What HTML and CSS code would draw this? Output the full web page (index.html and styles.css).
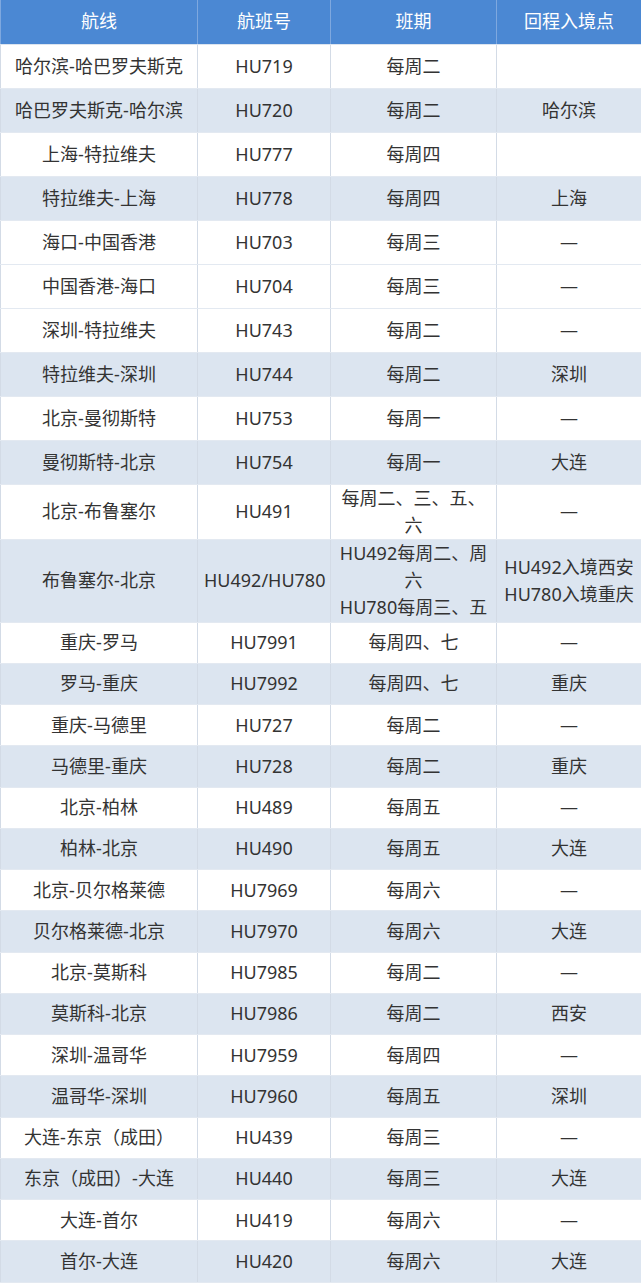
FILE: index.html
```html
<!DOCTYPE html>
<html lang="zh-CN">
<head>
<meta charset="utf-8">
<title>航线表</title>
<link rel="stylesheet" href="styles.css">
</head>
<body>
<table class="flights">
  <colgroup>
    <col class="c-route">
    <col class="c-no">
    <col class="c-sched">
    <col class="c-entry">
  </colgroup>
  <thead>
    <tr class="head"><th>航线</th><th>航班号</th><th>班期</th><th>回程入境点</th></tr>
  </thead>
  <tbody>
    <tr class="r44"><td>哈尔滨-哈巴罗夫斯克</td><td>HU719</td><td>每周二</td><td></td></tr>
    <tr class="r44 alt"><td>哈巴罗夫斯克-哈尔滨</td><td>HU720</td><td>每周二</td><td>哈尔滨</td></tr>
    <tr class="r44"><td>上海-特拉维夫</td><td>HU777</td><td>每周四</td><td></td></tr>
    <tr class="r44 alt"><td>特拉维夫-上海</td><td>HU778</td><td>每周四</td><td>上海</td></tr>
    <tr class="r44"><td>海口-中国香港</td><td>HU703</td><td>每周三</td><td>—</td></tr>
    <tr class="r44"><td>中国香港-海口</td><td>HU704</td><td>每周三</td><td>—</td></tr>
    <tr class="r44"><td>深圳-特拉维夫</td><td>HU743</td><td>每周二</td><td>—</td></tr>
    <tr class="r44 alt"><td>特拉维夫-深圳</td><td>HU744</td><td>每周二</td><td>深圳</td></tr>
    <tr class="r44"><td>北京-曼彻斯特</td><td>HU753</td><td>每周一</td><td>—</td></tr>
    <tr class="r44 alt"><td>曼彻斯特-北京</td><td>HU754</td><td>每周一</td><td>大连</td></tr>
    <tr class="r55"><td>北京-布鲁塞尔</td><td>HU491</td><td>每周二、三、五、六</td><td>—</td></tr>
    <tr class="r83 alt"><td>布鲁塞尔-北京</td><td>HU492/HU780</td><td>HU492每周二、周六<br>HU780每周三、五</td><td>HU492入境西安<br>HU780入境重庆</td></tr>
    <tr class="r41"><td>重庆-罗马</td><td>HU7991</td><td>每周四、七</td><td>—</td></tr>
    <tr class="r41 alt"><td>罗马-重庆</td><td>HU7992</td><td>每周四、七</td><td>重庆</td></tr>
    <tr class="r41"><td>重庆-马德里</td><td>HU727</td><td>每周二</td><td>—</td></tr>
    <tr class="r41 alt"><td>马德里-重庆</td><td>HU728</td><td>每周二</td><td>重庆</td></tr>
    <tr class="r41"><td>北京-柏林</td><td>HU489</td><td>每周五</td><td>—</td></tr>
    <tr class="r41 alt"><td>柏林-北京</td><td>HU490</td><td>每周五</td><td>大连</td></tr>
    <tr class="r41"><td>北京-贝尔格莱德</td><td>HU7969</td><td>每周六</td><td>—</td></tr>
    <tr class="r41 alt"><td>贝尔格莱德-北京</td><td>HU7970</td><td>每周六</td><td>大连</td></tr>
    <tr class="r41"><td>北京-莫斯科</td><td>HU7985</td><td>每周二</td><td>—</td></tr>
    <tr class="r41 alt"><td>莫斯科-北京</td><td>HU7986</td><td>每周二</td><td>西安</td></tr>
    <tr class="r41"><td>深圳-温哥华</td><td>HU7959</td><td>每周四</td><td>—</td></tr>
    <tr class="r41 alt"><td>温哥华-深圳</td><td>HU7960</td><td>每周五</td><td>深圳</td></tr>
    <tr class="r41"><td>大连-东京（成田）</td><td>HU439</td><td>每周三</td><td>—</td></tr>
    <tr class="r41 alt"><td>东京（成田）-大连</td><td>HU440</td><td>每周三</td><td>大连</td></tr>
    <tr class="r41"><td>大连-首尔</td><td>HU419</td><td>每周六</td><td>—</td></tr>
    <tr class="r41 alt"><td>首尔-大连</td><td>HU420</td><td>每周六</td><td>大连</td></tr>
  </tbody>
</table>
</body>
</html>
```
FILE: styles.css
```css
html, body {
  margin: 0;
  padding: 0;
  background: #ffffff;
}

body {
  font-family: "Noto Sans", "Noto Sans CJK SC", sans-serif;
  color: #333333;
}

.flights {
  width: 641px;
  border-collapse: collapse;
  table-layout: fixed;
}

.c-route { width: 197px; }
.c-no { width: 133px; }
.c-sched { width: 166px; }
.c-entry { width: 145px; }

.flights th,
.flights td {
  padding: 0 6px;
  text-align: center;
  vertical-align: middle;
  font-size: 18px;
  line-height: 27px;
  font-weight: normal;
  border-left: 1px solid #d3dbe6;
  border-right: 1px solid #d3dbe6;
  border-bottom: 1px solid #e3e9f1;
}

.head th {
  height: 44px;
  box-sizing: border-box;
  background: #4b88d3;
  color: #ffffff;
  border-left: 1px solid #7ea8df;
  border-right: 1px solid #7ea8df;
  border-bottom: 1px solid #dbe4ef;
}

.alt td {
  background: #dce5f0;
}

.r44 td { height: 44px; box-sizing: border-box; }
.r55 td { height: 55px; box-sizing: border-box; }
.r83 td { height: 83px; box-sizing: border-box; }
.r41 td { height: 41.25px; box-sizing: border-box; }
```
